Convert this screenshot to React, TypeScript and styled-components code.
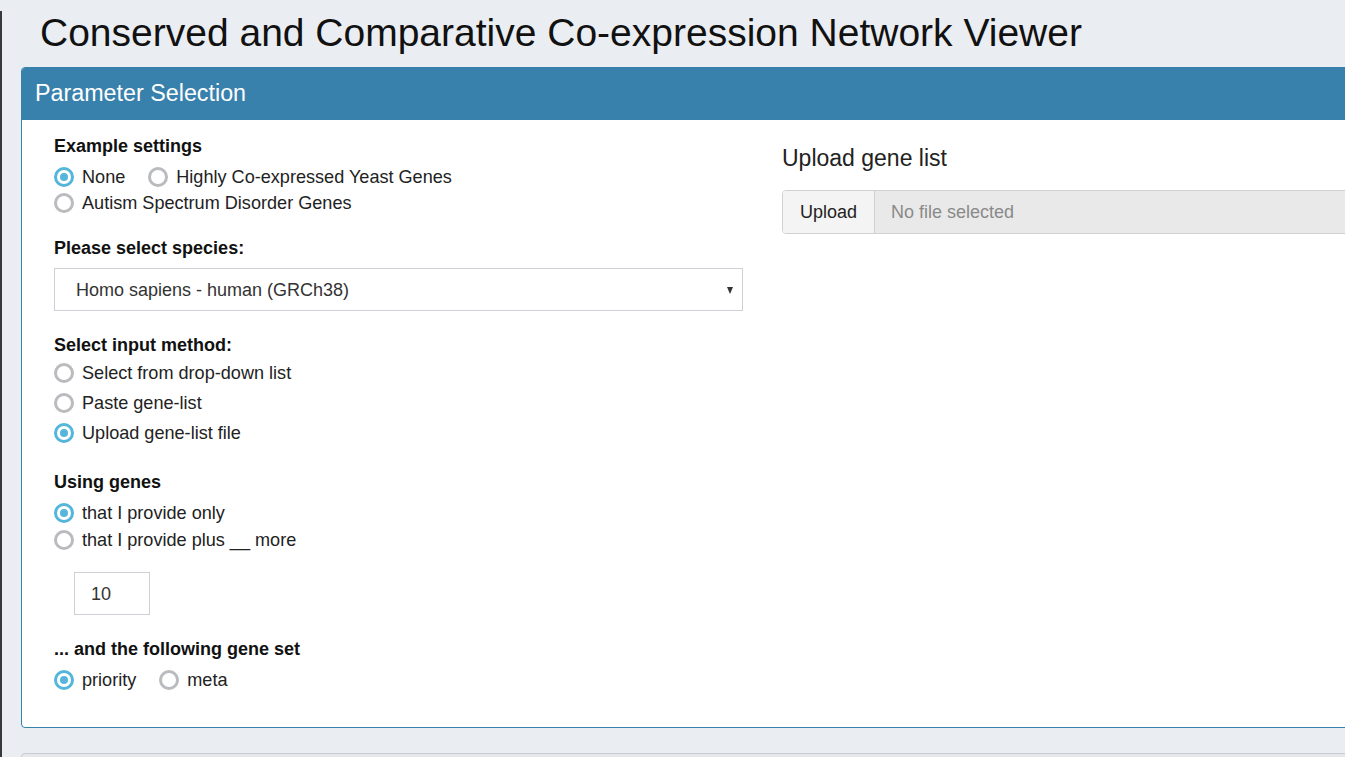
import styled, { createGlobalStyle } from "styled-components";

const GlobalStyle = createGlobalStyle`
  html, body {
    margin: 0;
    padding: 0;
    overflow: hidden;
    background: #eaedf1;
  }
  body {
    font-family: "Liberation Sans", Arial, sans-serif;
    color: #333;
  }
`;

const Page = styled.div`
  min-height: 100vh;
  border-left: 2px solid #3a3a3a;
  padding-left: 19px;
  box-sizing: border-box;
`;

const Title = styled.h1`
  margin: 11px 0 13px 19px;
  font-size: 39px;
  line-height: 43px;
  font-weight: 400;
  color: #111;
  white-space: nowrap;
`;

const Panel = styled.section<{ $tone?: "primary" | "default" }>`
  width: 1483px;
  border: 1px solid ${(p) => (p.$tone === "default" ? "#c9cdd2" : "#3881ac")};
  border-radius: 4px;
  background: ${(p) => (p.$tone === "default" ? "#e5e7ea" : "#fff")};
  margin-bottom: 25px;
  overflow: hidden;
`;

const PanelHeading = styled.div`
  background: #3881ac;
  color: #fff;
  font-size: 23.3px;
  line-height: 26px;
  padding: 12px 13px 14px 13px;
`;

const PanelBody = styled.div`
  display: grid;
  grid-template-columns: 689px 689px;
  column-gap: 39px;
  padding: 13px 32px 34px 32px;
`;

const Column = styled.div`
  display: flex;
  flex-direction: column;
`;

const GroupLabel = styled.div<{ $gap?: number }>`
  font-size: 18px;
  font-weight: 700;
  line-height: 26px;
  color: #111;
  margin-top: ${(p) => p.$gap ?? 0}px;
`;

const RadioStack = styled.div<{ $inline?: boolean; $rowGap?: number; $top?: number; $width?: number }>`
  display: flex;
  flex-direction: ${(p) => (p.$inline ? "row" : "column")};
  flex-wrap: wrap;
  column-gap: 23px;
  row-gap: ${(p) => p.$rowGap ?? 0}px;
  margin-top: ${(p) => p.$top ?? 5}px;
  width: ${(p) => (p.$width ? `${p.$width}px` : "auto")};
`;

const RadioLabel = styled.label`
  display: flex;
  align-items: center;
  gap: 8px;
  font-size: 18.1px;
  line-height: 26px;
  color: #222;
  white-space: nowrap;
`;

const Circle = styled.span<{ $checked?: boolean }>`
  position: relative;
  width: 20px;
  height: 20px;
  box-sizing: border-box;
  border-radius: 50%;
  border: 3px solid ${(p) => (p.$checked ? "#55b6d9" : "#b9bbbe")};
  background: #fff;
  flex: none;
  &::after {
    content: "";
    display: ${(p) => (p.$checked ? "block" : "none")};
    position: absolute;
    left: 3px;
    top: 3px;
    width: 8px;
    height: 8px;
    border-radius: 50%;
    background: #55b6d9;
  }
`;

const SelectBox = styled.div`
  margin-top: 7px;
  height: 43px;
  box-sizing: border-box;
  border: 1px solid #cdd0d4;
  display: flex;
  align-items: center;
  justify-content: space-between;
  padding: 1px 9px 0 21px;
  font-size: 18px;
  color: #333;
`;

const Caret = styled.span`
  width: 0;
  height: 0;
  border-left: 3px solid transparent;
  border-right: 3px solid transparent;
  border-top: 7px solid #333;
`;

const NumberBox = styled.div`
  margin: 19px 0 0 20px;
  width: 76px;
  height: 43px;
  box-sizing: border-box;
  border: 1px solid #cdd0d4;
  display: flex;
  align-items: center;
  padding: 1px 0 0 16px;
  font-size: 18px;
  color: #333;
`;

const SideHeading = styled.h4`
  margin: 12px 0 0 0;
  font-size: 23px;
  line-height: 26px;
  font-weight: 400;
  color: #222;
`;

const FileGroup = styled.div`
  margin-top: 19px;
  display: flex;
  height: 44px;
  box-sizing: border-box;
  border: 1px solid #cfd1d4;
  border-radius: 4px;
  overflow: hidden;
`;

const FileButton = styled.div`
  display: flex;
  align-items: center;
  padding: 1px 17px 0;
  background: #f4f4f4;
  border-right: 1px solid #cfd1d4;
  font-size: 18px;
  color: #222;
`;

const FileName = styled.div`
  flex: 1;
  display: flex;
  align-items: center;
  padding: 1px 0 0 16px;
  background: #e9e9e9;
  font-size: 18px;
  color: #8a8a8a;
`;

const Footer = styled(Panel)`
  height: 40px;
`;

type Option = { label: string; checked?: boolean };

const RadioGroup = ({
  options,
  inline,
  rowGap,
  top,
  width,
}: {
  options: Option[];
  inline?: boolean;
  rowGap?: number;
  top?: number;
  width?: number;
}) => (
  <RadioStack $inline={inline} $rowGap={rowGap} $top={top} $width={width}>
    {options.map((o) => (
      <RadioLabel key={o.label}>
        <Circle $checked={o.checked} />
        {o.label}
      </RadioLabel>
    ))}
  </RadioStack>
);

export default function App() {
  return (
    <Page>
      <GlobalStyle />
      <Title>Conserved and Comparative Co-expression Network Viewer</Title>
      <Panel>
        <PanelHeading>Parameter Selection</PanelHeading>
        <PanelBody>
          <Column>
            <GroupLabel>Example settings</GroupLabel>
            <RadioGroup
              inline
              top={5}
              width={420}
              options={[
                { label: "None", checked: true },
                { label: "Highly Co-expressed Yeast Genes" },
                { label: "Autism Spectrum Disorder Genes" },
              ]}
            />

            <GroupLabel $gap={19}>Please select species:</GroupLabel>
            <SelectBox>
              <span>Homo sapiens - human (GRCh38)</span>
              <Caret />
            </SelectBox>

            <GroupLabel $gap={21}>Select input method:</GroupLabel>
            <RadioGroup
              top={2}
              rowGap={4}
              options={[
                { label: "Select from drop-down list" },
                { label: "Paste gene-list" },
                { label: "Upload gene-list file", checked: true },
              ]}
            />

            <GroupLabel $gap={23}>Using genes</GroupLabel>
            <RadioGroup
              top={5}
              rowGap={1}
              options={[
                { label: "that I provide only", checked: true },
                { label: "that I provide plus __ more" },
              ]}
            />
            <NumberBox>10</NumberBox>

            <GroupLabel $gap={21}>... and the following gene set</GroupLabel>
            <RadioGroup
              inline
              top={5}
              options={[{ label: "priority", checked: true }, { label: "meta" }]}
            />
          </Column>

          <Column>
            <SideHeading>Upload gene list</SideHeading>
            <FileGroup>
              <FileButton>Upload</FileButton>
              <FileName>No file selected</FileName>
            </FileGroup>
          </Column>
        </PanelBody>
      </Panel>
      <Footer $tone="default" />
    </Page>
  );
}
